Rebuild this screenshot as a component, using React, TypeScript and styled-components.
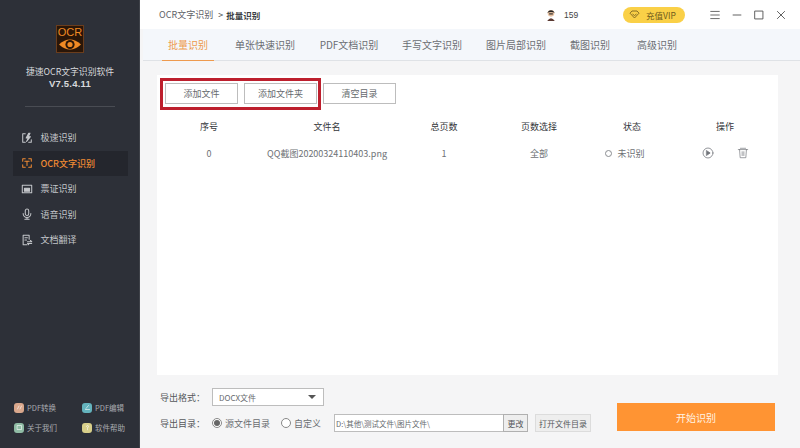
import React from "react";
import styled, { createGlobalStyle } from "styled-components";

const Global = createGlobalStyle`
  html, body { margin: 0; padding: 0; width: 800px; height: 448px; overflow: hidden; background: #f5f5f6; }
  * { box-sizing: border-box; }
  body { font-family: "Noto Sans CJK SC", "Noto Sans", sans-serif; }
`;

const Shell = styled.div`display: flex; width: 800px; height: 448px;`;

const Sidebar = styled.aside`
  width: 140px; height: 448px; background: #2d3038; box-shadow: inset -1px 0 0 #3f4249;
  display: flex; flex-direction: column; align-items: center; padding-top: 25px; flex: none;
`;
const Logo = styled.div`
  width: 28px; height: 28px; background: #2a1608; border: 1px solid #6b3d1c;
  display: flex; flex-direction: column; align-items: center; color: #f08a24;
`;
const LogoText = styled.span`
  font: 11px/12px "Liberation Sans", sans-serif; height: 11px;
`;
const AppName = styled.div`
  margin-top: 12px; font-size: 8.8px; line-height: 13px; color: #d8d9dc; text-align: center; white-space: nowrap;
`;
const Version = styled.div`
  font: 700 9.5px/11px "Liberation Sans", sans-serif; color: #d8d9dc; text-align: center; letter-spacing: 0.2px;
`;
const Divider = styled.div`width: 90px; height: 1px; background: #494c53; margin: 17px 0 18px;`;
const Nav = styled.nav`width: 100%; display: flex; flex-direction: column; align-items: center;`;
const NavItem = styled.div<{ $active?: boolean }>`
  width: 115px; height: 25.5px; padding-left: 8px; display: flex; align-items: center; gap: 8px;
  font-size: 9px; font-weight: ${p => (p.$active ? 500 : 400)};
  color: ${p => (p.$active ? "#ef8a33" : "#c4c6ca")};
  background: ${p => (p.$active ? "#24262d" : "transparent")};
  svg { flex: none; }
`;
const SideFoot = styled.div`
  margin-top: auto; padding: 0 0 15px 14px; width: 100%;
  display: grid; grid-template-columns: 68px 1fr; row-gap: 9px;
`;
const FootLink = styled.div`
  display: flex; align-items: center; gap: 3px; height: 11px; font-size: 7.5px; color: #a9abb0; white-space: nowrap;
`;
const FootIcon = styled.span<{ $c: string }>`
  width: 10px; height: 10px; border-radius: 3px; background: ${p => p.$c}; flex: none; color: #fff;
  display: flex; align-items: center; justify-content: center;
`;

const Main = styled.main`flex: 1; min-width: 0; display: flex; flex-direction: column; height: 448px;`;
const TopBar = styled.header`
  height: 29px; background: #fff; display: flex; align-items: center; padding-left: 19px; flex: none;
`;
const Crumb = styled.div`font-size: 9px; color: #5f6368; white-space: nowrap; display: flex; align-items: center;`;
const CrumbSep = styled.span`margin: 0 3px 0 5px; color: #444;`;
const CrumbNow = styled.b`font-weight: 700; font-size: 8.5px; color: #3c3f44;`;
const TopRight = styled.div`margin-left: auto; display: flex; align-items: center;`;
const Points = styled.span`font: 8.5px "Liberation Sans", sans-serif; color: #444; margin: 0 45px 0 8px; width: 14px;`;
const Vip = styled.div`
  width: 62px; height: 16px; border-radius: 8px; background: #fad047; color: #6f5a1c;
  display: flex; align-items: center; gap: 6px; padding-left: 6px; font-size: 8.5px; white-space: nowrap;
`;
const WinButtons = styled.div`display: flex; align-items: center; gap: 12px; margin: 0 14px 0 25px; color: #555;`;

const TabBar = styled.div`
  height: 32px; margin-left: 3px; background: #f4f7fb; border-bottom: 1px solid #dfe2e6;
  display: flex; align-items: stretch; padding-left: 19px; flex: none;
`;
const Tab = styled.div<{ $active?: boolean; $w: number }>`
  width: ${p => p.$w}px; display: flex; align-items: center; justify-content: center;
  font-size: 10px; white-space: nowrap; margin-bottom: -1px;
  color: ${p => (p.$active ? "#ee9a4d" : "#6b6e73")};
  border-bottom: 1px solid ${p => (p.$active ? "#ee9a4d" : "transparent")};
`;

const Body = styled.div`
  flex: 1; min-height: 0; margin-left: 3px; display: flex; flex-direction: column; padding: 14px 22px 0 14px; background: #f5f5f6;
`;
const Card = styled.section`
  position: relative; height: 300px; background: #fff; padding: 8px 0 0 8px; flex: none;
`;
const Toolbar = styled.div`display: flex; gap: 6px;`;
const ToolButton = styled.button`
  width: 73px; height: 21px; padding: 0; background: #fff; border: 1px solid #bdbdbd; border-radius: 0;
  font: 9px "Noto Sans CJK SC", sans-serif; color: #66696d;
`;
const Annotation = styled.div`
  position: absolute; left: 3px; top: 3px; width: 161px; height: 32px; border: 3px solid #bd1f2d; pointer-events: none;
`;
const Row = styled.div<{ $head?: boolean }>`
  display: grid; grid-template-columns: 104px 132px 102px 88px 98px 88px; margin-left: -8px;
  margin-top: ${p => (p.$head ? "13px" : "9px")};
  height: 18px; align-items: center; text-align: center; font-size: 9px;
  color: ${p => (p.$head ? "#34363a" : "#6e7175")};
`;
const Cell = styled.div`display: flex; align-items: center; justify-content: center; white-space: nowrap; gap: 5px;`;
const StatusCell = styled(Cell)`padding-right: 14px;`;
const Dot = styled.span`width: 7px; height: 7px; border: 1px solid #8a8d91; border-radius: 50%;`;
const Actions = styled(Cell)`gap: 23px; color: #71747a;`;

const Footer = styled.div`display: grid; grid-template-columns: 457px 158px; padding: 13px 0 0 3px; flex: 1;`;
const Options = styled.div`display: flex; flex-direction: column; gap: 8px;`;
const OptRow = styled.div`display: flex; align-items: center; height: 18px; font-size: 9px; color: #55585c;`;
const Label = styled.span`width: 52px; flex: none; white-space: nowrap;`;
const Select = styled.div`
  width: 112px; height: 18px; background: #fff; border: 1px solid #bdbdbd; display: flex; align-items: center;
  justify-content: space-between; padding: 0 7px 0 6px; font-size: 8px; color: #66696d;
`;
const Caret = styled.span`width: 0; height: 0; border: 4px solid transparent; border-top: 4px solid #555; border-bottom: 0;`;
const Radio = styled.span<{ $on?: boolean }>`
  width: 10px; height: 10px; border-radius: 50%; border: 1px solid #888; background: #fff; flex: none; display: flex;
  align-items: center; justify-content: center; margin-right: 3px;
  &::after { content: ""; width: 6px; height: 6px; border-radius: 50%; background: ${p => (p.$on ? "#666" : "transparent")}; }
`;
const RadioText = styled.span<{ $w: number }>`width: ${p => p.$w}px; flex: none; white-space: nowrap; font-size: 9px; color: #6a6d71;`;
const PathBox = styled.div`
  width: 169px; height: 18px; background: #fff; border: 1px solid #bdbdbd; border-right: 0;
  display: flex; align-items: center; padding-left: 1px; font-size: 7.5px; color: #66696d; white-space: nowrap; overflow: hidden;
`;
const Change = styled.button`
  width: 25px; height: 18px; padding: 0; background: #eee; border: 1px solid #b0b0b0; border-radius: 0;
  font: 8px "Noto Sans CJK SC", sans-serif; color: #55585c;
`;
const OpenDir = styled.button`
  width: 56px; height: 18px; margin-left: 7px; padding: 0; background: #eeeeee; border: 1px solid #dcdcdc; border-radius: 0;
  font: 8px "Noto Sans CJK SC", sans-serif; color: #55585c; white-space: nowrap;
`;
const Start = styled.button`
  align-self: start; margin-top: 15px; width: 158px; height: 28px; border: 0; padding: 0; background: #ff9433;
  color: #fff3e4; font: 10px "Noto Sans CJK SC", sans-serif;
`;

const I = ({ children, s = 12, w = 1.2 }: { children: React.ReactNode; s?: number; w?: number }) => (
  <svg width={s} height={s} viewBox="0 0 14 14" fill="none" stroke="currentColor" strokeWidth={w} strokeLinecap="round" strokeLinejoin="round">{children}</svg>
);

const nav = [
  { t: "极速识别", i: <><path d="M5 2H2v10h3M9 12h3V9" /><path d="M9 1.5 6 7h2.5L6.5 11 11 5.5H8.5L10.5 1.5z" fill="currentColor" /></> },
  { t: "OCR文字识别", a: true, i: <><path d="M2 5V2h3M9 2h3v3M2 9v3h3M9 12h3V9" /><path d="M4.5 5h5M7 5v5" /></> },
  { t: "票证识别", i: <><rect x="1.5" y="2.5" width="11" height="9" /><rect x="4" y="6" width="6" height="3.5" fill="currentColor" /></> },
  { t: "语音识别", i: <><rect x="5" y="1.2" width="4" height="7.5" rx="2" /><path d="M2.5 6.5a4.5 4.5 0 0 0 9 0M7 11v2M4.5 13h5" /></> },
  { t: "文档翻译", i: <><path d="M7 12.5H2.5v-11h7V6" /><path d="M4.5 4.5h3M4.5 7h2M7.5 9h5l-1.5-1.5M12.5 11h-5L9 12.5" /></> },
];

export default function App() {
  return (
    <Shell>
      <Global />
      <Sidebar>
        <Logo>
          <LogoText>OCR</LogoText>
          <svg width="24" height="15" viewBox="0 0 24 15">
            <path d="M1 7.5q11-10 22 0q-11 10-22 0z" fill="#f08a24" />
            <circle cx="12" cy="7.5" r="4.6" fill="#2a1608" />
            <circle cx="12" cy="7.5" r="2.6" fill="#f08a24" />
          </svg>
        </Logo>
        <AppName>捷速OCR文字识别软件</AppName>
        <Version>V7.5.4.11</Version>
        <Divider />
        <Nav>
          {nav.map(n => (
            <NavItem key={n.t} $active={n.a}><I>{n.i}</I>{n.t}</NavItem>
          ))}
        </Nav>
        <SideFoot>
          <FootLink><FootIcon $c="#d9a78c"><I s={7}><path d="M3 10 6 4M8 10l3-6" /></I></FootIcon>PDF转换</FootLink>
          <FootLink><FootIcon $c="#64b3bd"><I s={7}><path d="M3 11h8M4 9l5-6" /></I></FootIcon>PDF编辑</FootLink>
          <FootLink><FootIcon $c="#90bca5"><I s={7}><rect x="3" y="3" width="8" height="8" /></I></FootIcon>关于我们</FootLink>
          <FootLink><FootIcon $c="#d8cf8a"><I s={7}><path d="M5 5a2 2 0 1 1 2 2v2M7 11v.5" /></I></FootIcon>软件帮助</FootLink>
        </SideFoot>
      </Sidebar>
      <Main>
        <TopBar>
          <Crumb>OCR文字识别<CrumbSep>&gt;</CrumbSep><CrumbNow>批量识别</CrumbNow></Crumb>
          <TopRight>
            <svg width="10" height="12" viewBox="0 0 9 11">
              <circle cx="4.5" cy="4" r="3" fill="#e6c0a0" />
              <path d="M1 3.5Q4.5-1 8 3.5Q4.5 2 1 3.5z" fill="#222" />
              <path d="M1 11q3.5-5 7 0z" fill="#5b3a32" />
              <path d="M2.8 4.5h3.4" stroke="#222" strokeWidth="1" />
            </svg>
            <Points>159</Points>
            <Vip>
              <svg width="11" height="9" viewBox="0 0 11 9" fill="none" stroke="#7a6320" strokeWidth="0.9">
                <path d="M1 3.2 3 1h5l2 2.2L5.5 8z" /><path d="M3.5 4 5.5 5.5 7.5 4" />
              </svg>
              充值VIP
            </Vip>
            <WinButtons>
              <I s={10} w={1.2}><path d="M1 2h12M1 7h12M1 12h12" /></I>
              <I s={10} w={1.3}><path d="M1.5 7h11" /></I>
              <I s={10} w={1.3}><rect x="1.5" y="1.5" width="11" height="11" /></I>
              <I s={10} w={1.3}><path d="M2 2l10 10M12 2 2 12" /></I>
            </WinButtons>
          </TopRight>
        </TopBar>
        <TabBar>
          <Tab $active $w={52}>批量识别</Tab>
          <Tab $w={102}>单张快速识别</Tab>
          <Tab $w={66}>PDF文档识别</Tab>
          <Tab $w={100}>手写文字识别</Tab>
          <Tab $w={68}>图片局部识别</Tab>
          <Tab $w={80}>截图识别</Tab>
          <Tab $w={54}>高级识别</Tab>
        </TabBar>
        <Body>
          <Card>
            <Toolbar>
              <ToolButton>添加文件</ToolButton>
              <ToolButton>添加文件夹</ToolButton>
              <ToolButton>清空目录</ToolButton>
            </Toolbar>
            <Annotation />
            <Row $head>
              <Cell>序号</Cell><Cell>文件名</Cell><Cell>总页数</Cell><Cell>页数选择</Cell><Cell>状态</Cell><Cell>操作</Cell>
            </Row>
            <Row>
              <Cell>0</Cell>
              <Cell>QQ截图20200324110403.png</Cell>
              <Cell>1</Cell>
              <Cell>全部</Cell>
              <StatusCell><Dot />未识别</StatusCell>
              <Actions>
                <I s={12} w={0.9}><circle cx="7" cy="7" r="5.8" /><path d="M5.5 4.3 9.5 7l-4 2.7z" fill="currentColor" /></I>
                <I s={12} w={0.8}><path d="M1.5 3h11M3 3l.7 9.5h6.6L11 3M4 1.5h6M6 5.5v4.5M8 5.5v4.5" /></I>
              </Actions>
            </Row>
          </Card>
          <Footer>
            <Options>
              <OptRow><Label>导出格式：</Label><Select>DOCX文件<Caret /></Select></OptRow>
              <OptRow>
                <Label>导出目录：</Label>
                <Radio $on /><RadioText $w={56}>源文件目录</RadioText>
                <Radio /><RadioText $w={40}>自定义</RadioText>
                <PathBox>D:\其他\测试文件\图片文件\</PathBox>
                <Change>更改</Change>
                <OpenDir>打开文件目录</OpenDir>
              </OptRow>
            </Options>
            <Start>开始识别</Start>
          </Footer>
        </Body>
      </Main>
    </Shell>
  );
}
